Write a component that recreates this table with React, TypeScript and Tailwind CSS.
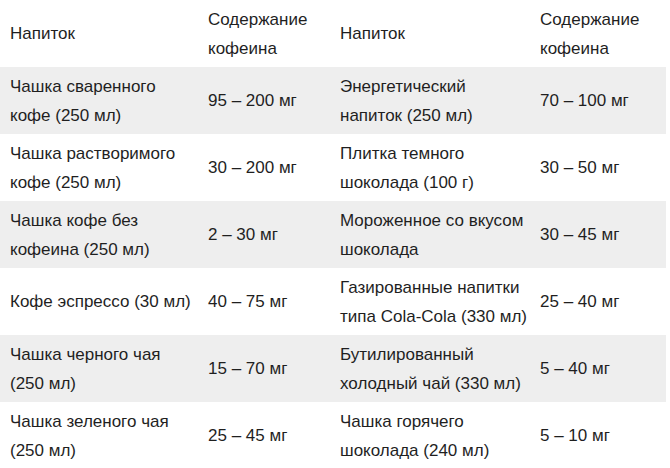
import React from "react";

const header = ["Напиток", "Содержание кофеина", "Напиток", "Содержание кофеина"];

const rows: [string, string, string, string][] = [
  ["Чашка сваренного кофе (250 мл)", "95 – 200 мг", "Энергетический напиток (250 мл)", "70 – 100 мг"],
  ["Чашка растворимого кофе (250 мл)", "30 – 200 мг", "Плитка темного шоколада (100 г)", "30 – 50 мг"],
  ["Чашка кофе без кофеина (250 мл)", "2 – 30 мг", "Мороженное со вкусом шоколада", "30 – 45 мг"],
  ["Кофе эспрессо (30 мл)", "40 – 75 мг", "Газированные напитки типа Cola-Cola (330 мл)", "25 – 40 мг"],
  ["Чашка черного чая (250 мл)", "15 – 70 мг", "Бутилированный холодный чай (330 мл)", "5 – 40 мг"],
  ["Чашка зеленого чая (250 мл)", "25 – 45 мг", "Чашка горячего шоколада (240 мл)", "5 – 10 мг"],
];

const breaks: Record<string, string[]> = {
  "Содержание кофеина": ["Содержание", "кофеина"],
  "Чашка сваренного кофе (250 мл)": ["Чашка сваренного", "кофе (250 мл)"],
  "Энергетический напиток (250 мл)": ["Энергетический", "напиток (250 мл)"],
  "Чашка растворимого кофе (250 мл)": ["Чашка растворимого", "кофе (250 мл)"],
  "Плитка темного шоколада (100 г)": ["Плитка темного", "шоколада (100 г)"],
  "Чашка кофе без кофеина (250 мл)": ["Чашка кофе без", "кофеина (250 мл)"],
  "Мороженное со вкусом шоколада": ["Мороженное со вкусом", "шоколада"],
  "Газированные напитки типа Cola-Cola (330 мл)": ["Газированные напитки", "типа Cola-Cola (330 мл)"],
  "Чашка черного чая (250 мл)": ["Чашка черного чая", "(250 мл)"],
  "Бутилированный холодный чай (330 мл)": ["Бутилированный", "холодный чай (330 мл)"],
  "Чашка зеленого чая (250 мл)": ["Чашка зеленого чая", "(250 мл)"],
  "Чашка горячего шоколада (240 мл)": ["Чашка горячего", "шоколада (240 мл)"],
};

function Cell({ text }: { text: string }) {
  const lines = breaks[text] ?? [text];
  return (
    <div className="flex items-center px-[10px]">
      <div>
        {lines.map((l, i) => (
          <div key={i} className="whitespace-nowrap">
            {l}
          </div>
        ))}
      </div>
    </div>
  );
}

export default function App() {
  return (
    <div
      className="w-[670px] h-[468px] overflow-hidden bg-white text-[17px] leading-[29px] text-[#1f1f1f]"
      style={{ fontFamily: '"Liberation Sans", Arial, sans-serif' }}
    >
      <div className="w-[666px]">
        <div className="grid grid-cols-[198px_132px_200px_136px] h-[67px]">
          {header.map((h, i) => (
            <Cell key={i} text={h} />
          ))}
        </div>
        {rows.map((r, ri) => (
          <div
            key={ri}
            className={`grid grid-cols-[198px_132px_200px_136px] h-[67px] ${ri % 2 === 0 ? "bg-[#eeeeee]" : "bg-white"}`}
          >
            {r.map((c, ci) => (
              <Cell key={ci} text={c} />
            ))}
          </div>
        ))}
      </div>
    </div>
  );
}
